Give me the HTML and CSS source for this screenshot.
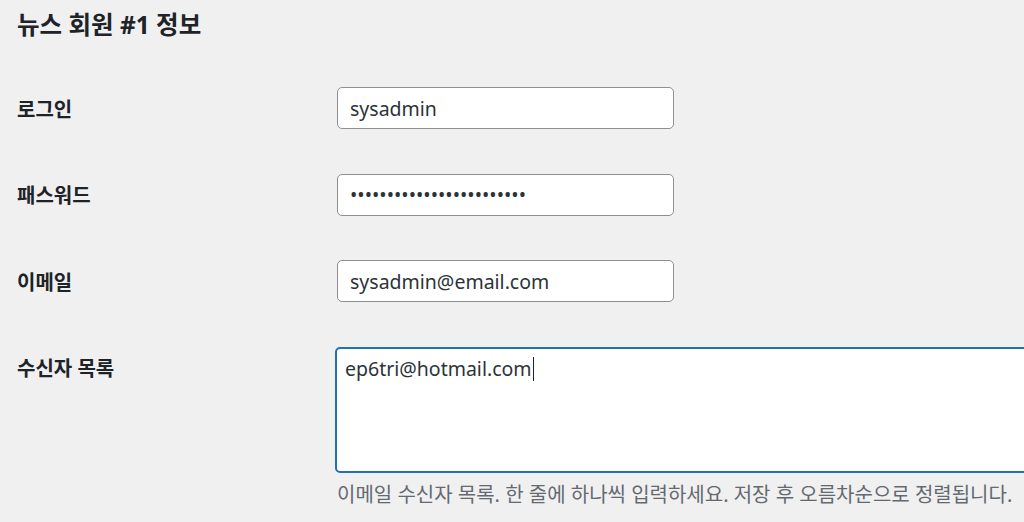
FILE: index.html
```html
<!DOCTYPE html>
<html lang="ko">
<head>
  <meta charset="UTF-8" />
  <title>뉴스 회원 정보</title>
  <link rel="stylesheet" href="styles.css">
</head>
<body>
  <div class="wrap">
    <h2 class="title">뉴스 회원 #1 정보</h2>

    <form class="form-table">
      <div class="row">
        <label class="label" for="login">로그인</label>
        <div class="field">
          <input class="text" type="text" id="login" value="sysadmin" />
        </div>
      </div>

      <div class="row">
        <label class="label" for="pass">패스워드</label>
        <div class="field">
          <input class="text" type="password" id="pass" value="abcdefghijklmnopqrstuvwx" />
        </div>
      </div>

      <div class="row">
        <label class="label" for="email">이메일</label>
        <div class="field">
          <input class="text" type="text" id="email" value="sysadmin@email.com" />
        </div>
      </div>

      <div class="row row-top">
        <label class="label" for="recipients">수신자 목록</label>
        <div class="field">
          <div class="area-wrap">
            <textarea class="area" id="recipients">ep6tri@hotmail.com</textarea>
            <div class="caret-layer"><span class="ghost">ep6tri@hotmail.com</span><span class="caret"></span></div>
          </div>
          <p class="description">이메일 수신자 목록. 한 줄에 하나씩 입력하세요. 저장 후 오름차순으로 정렬됩니다.</p>
        </div>
      </div>
    </form>
  </div>
</body>
</html>
```

FILE: styles.css
```css
html, body {
  margin: 0;
  height: 100%;
  overflow: hidden;
}

body {
  background: #f0f0f1;
  color: #1d2327;
  font-family: "Noto Sans", "Noto Sans CJK KR", sans-serif;
}

.wrap {
  padding: 0 0 0 17px;
}

.title {
  margin: 0;
  padding-top: 9px;
  font-size: 24.5px;
  line-height: 32px;
  font-weight: 700;
}

.form-table {
  margin-top: 46px;
}

.row {
  display: flex;
  align-items: center;
  margin-bottom: 44.6px;
}

.row-top {
  align-items: flex-start;
}

.label {
  width: 320px;
  flex-shrink: 0;
  font-size: 20px;
  font-weight: 700;
  color: #1d2327;
}

.row-top .label {
  padding-top: 6px;
}

.field {
  flex: 1;
}

.text {
  box-sizing: border-box;
  width: 337px;
  height: 42px;
  padding: 0 12px;
  border: 1px solid #8c8f94;
  border-radius: 5px;
  background: #fff;
  color: #2c3338;
  font-family: inherit;
  font-size: 19.5px;
  outline: none;
}

.area-wrap {
  position: relative;
  margin-left: -2px;
}

.area,
.caret-layer {
  box-sizing: border-box;
  padding: 5px 8px;
  font-family: "Noto Sans", "Noto Sans CJK KR", sans-serif;
  font-size: 19.5px;
  line-height: 30px;
  border: 2px solid transparent;
}

.area {
  display: block;
  width: 760px;
  height: 126px;
  border-color: #2271b1;
  border-radius: 5px;
  background: #fff;
  color: #2c3338;
  resize: none;
  outline: none;
}

.caret-layer {
  position: absolute;
  top: 0;
  left: 0;
  pointer-events: none;
}

.ghost {
  visibility: hidden;
}

.caret {
  display: inline-block;
  width: 1px;
  height: 24px;
  margin-left: 1px;
  vertical-align: -5px;
  background: #1d2327;
}

.description {
  margin: 6px 0 0;
  font-size: 20px;
  color: #646970;
}
```
